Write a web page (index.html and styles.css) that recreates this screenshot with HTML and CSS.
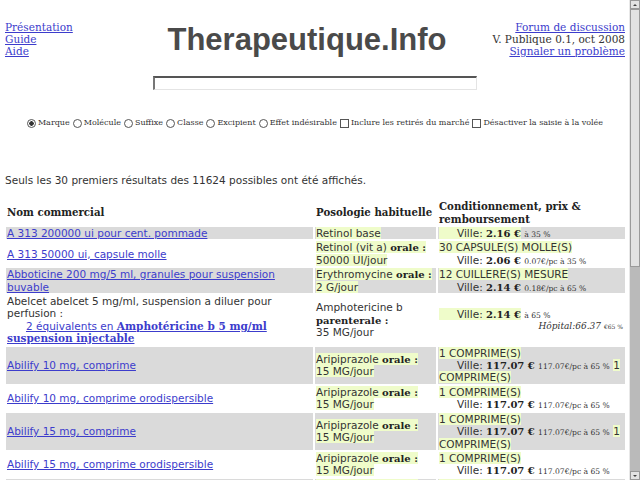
FILE: index.html
```html
<!DOCTYPE html>
<html lang="fr">
<head>
<meta charset="utf-8">
<title>Therapeutique.Info</title>
<link rel="stylesheet" href="styles.css">
</head>
<body>
<div class="page">
  <header class="top">
    <nav class="side left">
      <a href="#">Présentation</a>
      <a href="#">Guide</a>
      <a href="#">Aide</a>
    </nav>
    <h1 class="title">Therapeutique.Info</h1>
    <div class="side right">
      <a href="#">Forum de discussion</a>
      <span>V. Publique 0.1, oct 2008</span>
      <a href="#">Signaler un problème</a>
    </div>
  </header>

  <form class="search">
    <input type="text" class="query">
    <div class="opts">
      <label><input type="radio" name="t" checked>Marque</label>
      <label><input type="radio" name="t">Molécule</label>
      <label><input type="radio" name="t">Suffixe</label>
      <label><input type="radio" name="t">Classe</label>
      <label><input type="radio" name="t">Excipient</label>
      <label><input type="radio" name="t">Effet indésirable</label>
      <label><input type="checkbox">Inclure les retirés du marché</label>
      <label><input type="checkbox">Désactiver la saisie à la volée</label>
    </div>
  </form>

  <p class="info">Seuls les 30 premiers résultats des 11624 possibles ont été affichés.</p>

  <table class="res">
    <colgroup><col class="c1"><col class="c2"><col class="c3"></colgroup>
    <thead>
      <tr><th>Nom commercial</th><th>Posologie habituelle</th><th>Conditionnement, prix &amp; remboursement</th></tr>
    </thead>
    <tbody>
      <tr class="g">
        <td><a href="#">A 313 200000 ui pour cent. pommade</a></td>
        <td><span class="hl">Retinol base</span></td>
        <td><span class="hl price">Ville: <b>2.16 €</b></span> <small>à 35 %</small></td>
      </tr>
      <tr>
        <td><a href="#">A 313 50000 ui, capsule molle</a></td>
        <td><span class="hl">Retinol (vit a) <b>orale :</b> 50000&nbsp;UI/jour</span></td>
        <td><span class="hl">30 CAPSULE(S) MOLLE(S)</span><br><span class="price">Ville: <b>2.06 €</b></span> <small>0.07€/pc à 35 %</small></td>
      </tr>
      <tr class="g">
        <td><a href="#">Abboticine 200 mg/5 ml, granules pour suspension buvable</a></td>
        <td><span class="hl">Erythromycine <b>orale :</b> 2&nbsp;G/jour</span></td>
        <td><span class="hl">12 CUILLERE(S) MESURE</span><br><span class="price">Ville: <b>2.14 €</b></span> <small>0.18€/pc à 65 %</small></td>
      </tr>
      <tr>
        <td>Abelcet abelcet 5 mg/ml, suspension a diluer pour perfusion :<br><a href="#" class="equiv">2 équivalents en <b>Amphotéricine b 5 mg/ml suspension injectable</b></a></td>
        <td>Amphotericine b <b>parenterale :</b> 35&nbsp;MG/jour</td>
        <td><span class="hl price">Ville: <b>2.14 €</b></span> <small>à 65 %</small><div class="hosp"><i>Hôpital:66.37</i> <small>€65 %</small></div></td>
      </tr>
      <tr class="g">
        <td><a href="#">Abilify 10 mg, comprime</a></td>
        <td><span class="hl">Aripiprazole <b>orale :</b> 15&nbsp;MG/jour</span></td>
        <td><span class="hl">1 COMPRIME(S)</span><br><span class="price">Ville: <b>117.07 €</b></span> <small>117.07€/pc à 65 %</small> <span class="hl">1 COMPRIME(S)</span></td>
      </tr>
      <tr>
        <td><a href="#">Abilify 10 mg, comprime orodispersible</a></td>
        <td><span class="hl">Aripiprazole <b>orale :</b> 15&nbsp;MG/jour</span></td>
        <td><span class="hl">1 COMPRIME(S)</span><br><span class="price">Ville: <b>117.07 €</b></span> <small>117.07€/pc à 65 %</small></td>
      </tr>
      <tr class="g">
        <td><a href="#">Abilify 15 mg, comprime</a></td>
        <td><span class="hl">Aripiprazole <b>orale :</b> 15&nbsp;MG/jour</span></td>
        <td><span class="hl">1 COMPRIME(S)</span><br><span class="price">Ville: <b>117.07 €</b></span> <small>117.07€/pc à 65 %</small> <span class="hl">1 COMPRIME(S)</span></td>
      </tr>
      <tr>
        <td><a href="#">Abilify 15 mg, comprime orodispersible</a></td>
        <td><span class="hl">Aripiprazole <b>orale :</b> 15&nbsp;MG/jour</span></td>
        <td><span class="hl">1 COMPRIME(S)</span><br><span class="price">Ville: <b>117.07 €</b></span> <small>117.07€/pc à 65 %</small></td>
      </tr>
      <tr class="g">
        <td><a href="#">Abilify 20 mg, comprime</a></td>
        <td><span class="hl">Aripiprazole <b>orale :</b> 15&nbsp;MG/jour</span></td>
        <td><span class="hl">1 COMPRIME(S)</span><br><span class="price">Ville: <b>117.07 €</b></span> <small>117.07€/pc à 65 %</small></td>
      </tr>
    </tbody>
  </table>
</div>

<div class="scrollbar" aria-hidden="true">
  <div class="sb-btn sb-up"></div>
  <div class="sb-thumb"></div>
  <div class="sb-track"></div>
  <div class="sb-btn sb-down"></div>
</div>
</body>
</html>
```

FILE: styles.css
```css
html, body {
  margin: 0;
  padding: 0;
  height: 100%;
  overflow: hidden;
  background: #fff;
}
body {
  font-family: "DejaVu Sans", Verdana, sans-serif;
  font-size: 10.5px;
  color: #333;
}
a { color: #3c3ccc; }

.page {
  width: 620px;
  padding: 0 5px;
}

/* header */
.top {
  display: grid;
  grid-template-columns: 1fr auto 1fr;
  align-items: start;
  padding-top: 21px;
}
.side {
  display: flex;
  flex-direction: column;
  font-family: "DejaVu Serif", serif;
  font-size: 10.5px;
  line-height: 12px;
}
.left { align-items: flex-start; }
.right { align-items: flex-end; color: #333; }
.title {
  margin: 1px 16px 0 0;
  font-family: "Liberation Sans", Arial, sans-serif;
  font-weight: bold;
  font-size: 31px;
  color: #4a4a4a;
}

/* search */
.search {
  display: flex;
  flex-direction: column;
  align-items: center;
  margin-top: 18px;
}
.query {
  box-sizing: border-box;
  width: 324px;
  height: 14px;
  margin: 0;
  padding: 0;
  border-style: solid;
  border-width: 2px 1px 1px 2px;
  border-color: #555 #e4e4e4 #e4e4e4 #777;
  background: #fff;
}
.opts {
  margin-top: 28px;
  font-family: "DejaVu Serif", serif;
  font-size: 8px;
  line-height: 10px;
  color: #333;
  display: flex;
  gap: 3px;
}
.opts label {
  display: inline-flex;
  align-items: center;
}
.opts input {
  appearance: none;
  -webkit-appearance: none;
  box-sizing: border-box;
  width: 9px;
  height: 9px;
  margin: 0 2px 0 0;
  border: 1px solid #555;
  background: #fff;
}
.opts input[type="radio"] { border-radius: 50%; }
.opts input[type="radio"]:checked {
  background: radial-gradient(circle, #333 0 2px, #fff 2.5px);
}

.info {
  margin: 46px 0 12px;
  line-height: 12px;
}

/* results */
.res {
  table-layout: fixed;
  width: 623px;
  margin-left: -1px;
  border-spacing: 2px;
}
.c1 { width: 307px; }
.c2 { width: 121px; }
.c3 { width: 187px; }
.res th {
  text-align: left;
  font-family: "DejaVu Serif", serif;
  font-size: 10.2px;
  font-weight: bold;
  color: #222;
  padding: 0 1px;
  line-height: 12.5px;
}
.res td {
  padding: 0 0 0 1px;
  vertical-align: middle;
  line-height: 12.4px;
}
.res tr.g td { background: #dadada; }
.res b {
  font-family: "DejaVu Serif", serif;
  font-weight: bold;
  color: #222;
  line-height: 1;
}
.res td b { font-size: 10px; }
.res td a b { font-size: 10.5px; color: inherit; }
.hl { background: #effcca; }
.price { padding-left: 18px; }
.res td small {
  font-family: "DejaVu Serif", serif;
  font-size: 7.6px;
  line-height: 1;
}
.equiv { margin-left: 19px; }
.hosp {
  text-align: right;
  padding-right: 2px;
  font-family: "DejaVu Serif", serif;
  font-size: 9px;
  line-height: 11px;
}
.res .hosp small { font-size: 6px; }

/* scrollbar drawn over the right edge */
.scrollbar {
  position: fixed;
  top: 0;
  right: 0;
  width: 10px;
  height: 480px;
  display: flex;
  flex-direction: column;
  background: #bcbcbc;
  border-left: 1px solid #e8e8e8;
}
.sb-btn {
  height: 9px;
  background: #e4e4e4;
  border: 1px solid #999;
  box-sizing: border-box;
  position: relative;
}
.sb-btn::after {
  content: "";
  position: absolute;
  left: 2px;
  border-left: 2px solid transparent;
  border-right: 2px solid transparent;
}
.sb-up::after { top: 3px; border-bottom: 2px solid #444; }
.sb-down::after { top: 3px; border-top: 2px solid #444; }
.sb-thumb {
  height: 258px;
  background: #e2e2e2;
  border: 1px solid #9a9a9a;
  box-sizing: border-box;
}
.sb-track { flex: 1; background: #bababa; }
```
